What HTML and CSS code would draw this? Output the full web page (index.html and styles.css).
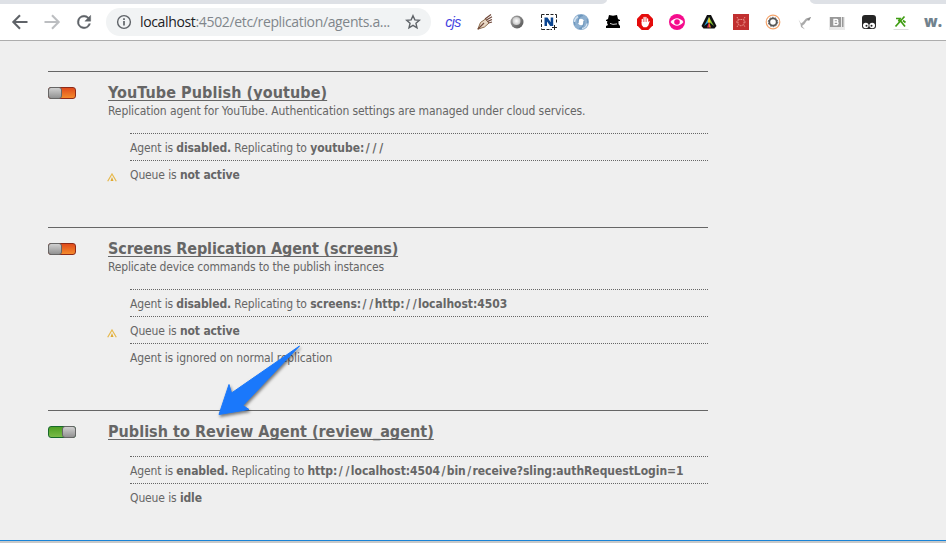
FILE: index.html
```
<!DOCTYPE html>
<html lang="en">
<head>
<meta charset="utf-8">
<title>Replication agents</title>
<link rel="stylesheet" href="styles.css">
</head>
<body>
<div class="tabs"><div class="active-tab"></div><div class="tab-rest"></div></div>
<header class="toolbar">
  <nav class="nav">
    <svg viewBox="0 0 24 24" width="20" height="20"><path d="M21 12H4.500M12 4l-8 8 8 8" fill="none" stroke="#5f6368" stroke-width="2.500"/></svg>
    <svg viewBox="0 0 24 24" width="20" height="20"><path d="M3 12h16.500M12 4l8 8-8 8" fill="none" stroke="#bcbec1" stroke-width="2.500"/></svg>
    <svg viewBox="0 0 24 24" width="20" height="20"><path d="M17.650 6.350A7.950 7.950 0 0 0 12 4a8 8 0 1 0 7.730 10h-2.080A6 6 0 1 1 12 6c1.660 0 3.140.690 4.220 1.780L13 11h7V4z" fill="#5f6368" stroke="#5f6368" stroke-width=".5"/></svg>
  </nav>
  <div class="address">
    <svg viewBox="0 0 16 16" width="16" height="16"><circle cx="8" cy="8" r="6.400" fill="none" stroke="#5f6368" stroke-width="1.400"/><path d="M8 7v4.500M8 4.200v1.700" stroke="#5f6368" stroke-width="1.700"/></svg>
    <span class="url">localhost<span class="path">:4502/etc/replication/agents.a...</span></span>
    <svg class="star" viewBox="0 0 16 16" width="16" height="16"><path d="M8 1.700l1.850 4.200 4.550.400-3.450 3 1.050 4.500L8 11.400l-4 2.400 1.050-4.500-3.450-3 4.550-.400z" fill="none" stroke="#5f6368" stroke-width="1.400"/></svg>
  </div>
  <div class="extensions">
    <span class="cjs">cjs</span>
    <svg viewBox="0 0 16 16" width="16" height="16"><path d="M.8 15.200L3.500 8.500 8.500 5l3.500 4-4.500 4z" fill="#e9d8c4" stroke="#8b6b4b" stroke-width="1"/><path d="M1 15l6-6M8 5l6-4.500M9 6.300l6-3.500M10.300 7.600L15 5.500M11.500 9L15 8" fill="none" stroke="#70483a" stroke-width="1.200"/></svg>
    <svg viewBox="0 0 16 16" width="16" height="16"><defs><linearGradient id="ball" x2="1" y2="1"><stop stop-color="#aaa"/><stop offset="1" stop-color="#505050"/></linearGradient><radialGradient id="shine"><stop stop-color="#fff"/><stop offset="1" stop-color="#c8c8c8"/></radialGradient></defs><circle cx="8" cy="8" r="6.500" fill="url(#ball)"/><circle cx="7.500" cy="7" r="4" fill="url(#shine)"/></svg>
    <svg viewBox="0 0 16 16" width="16" height="16"><path d="M.5 4V.5h3M5 .5h3M9.500.5h3M14 .5h1.500V4M15.500 5.500v3M.5 5.500v3M.5 10v3M.5 14.500v1H4M5.500 15.500h3M9.500 15.500h1.500M11 13.500h5M13.500 11v5" fill="none" stroke="#222"/><path d="M3.500 12V3.500h3l3.200 4.700V3.500h2.500V12h-3L6 7.400V12z" fill="#0b4590"/></svg>
    <svg viewBox="0 0 16 16" width="16" height="16"><circle cx="8" cy="8" r="5.500" fill="none" stroke="#8eb0d0" stroke-width="5"/><path d="M2 11a7 7 0 0 1 8-9.500C6 2 5 5 5 9M14 5a7 7 0 0 1-8 9.500c4-.500 5-3.500 5-7.500" fill="none" stroke="#6e97bd" stroke-width="1.200"/><path d="M1.500 8A6.500 6.500 0 0 1 5 2.500M9 14.500a6 6 0 0 0 5-5" fill="none" stroke="#d2e1ef" stroke-width="1.500"/><ellipse cx="8" cy="8" rx="2" ry="3.300" fill="#fff"/></svg>
    <svg viewBox="0 0 16 16" width="16" height="16"><path d="M3 5l1-4 4 .8 4-.8 1 4 2 1v1H1V6zM2.500 6h11v4l1.500 2v2H1v-2l2-1-1-2z" fill="#000"/><path d="M5 9.400l3 1 4-.5" stroke="#fff" stroke-width=".8" fill="none"/></svg>
    <svg viewBox="0 0 16 16" width="16" height="16"><path d="M4.700 0h6.600L16 4.700v6.600L11.300 16H4.700L0 11.300V4.700z" fill="#e40b0b"/><path d="M5.300 9V5.500M7.100 9V3.500M8.900 9V3.500M10.600 9V5" stroke="#fff" stroke-width="1.300" stroke-linecap="round"/><path d="M4.700 8h6.500l1-1 .5.600-1.500 4.100-1.700 1.500h-3L4.700 11z" fill="#fff"/></svg>
    <svg viewBox="0 0 16 16" width="16" height="16"><circle cx="8" cy="8" r="8" fill="#f50b8c"/><path d="M1.500 8Q8 .5 14.500 8 8 15.500 1.500 8z" fill="#fff"/><circle cx="8" cy="8" r="2.800" fill="#f50b8c"/></svg>
    <svg viewBox="0 0 16 16" width="16" height="16"><path d="M6 1h4l5.500 11-2 2.500h-11L.5 12z" fill="#111"/><path d="M8 3v5l-5 4z" fill="#29a3dd"/><path d="M8 3v5l5 4z" fill="#7fbd32"/><path d="M8 3l1.500 5L8 9 6.500 8z" fill="#f4cf22"/><path d="M8 8l2 5.500H8z" fill="#ed7f22"/><path d="M8 8l-2 5.500h2z" fill="#d92750"/></svg>
    <svg viewBox="0 0 16 16" width="16" height="16"><path d="M0 0h16v16H0z" fill="#c13030"/><path d="M4 3l1.500 2.500h5L12 3M3 8h2M11 8h2M4 13l1.500-2.500L8 12l2.500-1.500L12 13M5 5.500v5M11 5.500v5" fill="none" stroke="#ed9b91" stroke-width=".9" stroke-dasharray="1.700 .7"/></svg>
    <svg viewBox="0 0 16 16" width="16" height="16"><circle cx="8" cy="8" r="6.800" fill="#fff" stroke="#f4a46c" stroke-width="1.200"/><circle cx="8" cy="8" r="3.700" fill="none" stroke="#555" stroke-width="1.800"/><circle cx="8" cy="8" r="4.700" fill="none" stroke="#555" stroke-dasharray="1.500 1.450"/></svg>
    <svg viewBox="0 0 16 16" width="16" height="16"><path d="M1.500 5.500l2.500 4 2-1.500 3-3.500 5-1.500-1.500 2.500-3 1.500-2 3-2.500 2 3 3.500-4-2.500-.500-3z" fill="#aaa"/><path d="M10 5l4-2-2 4z" fill="#8b8b8b"/></svg>
    <svg viewBox="0 0 16 16" width="16" height="16"><path d="M0 3h16v13H0z" fill="#e9e9e9"/><path d="M1 3h11v10H1zM13 3h1.500v10H13z" fill="#999"/><path d="M5 5.500h2.500a1.200 1.200 0 0 1 0 2.500H5h3a1.400 1.400 0 0 1 0 2.700H5z" fill="none" stroke="#fff" stroke-width="1.400"/></svg>
    <svg viewBox="0 0 16 16" width="16" height="16"><rect x="1" y="1" width="14" height="14" rx="3" fill="#252525"/><circle cx="4.800" cy="11.500" r="2.800" fill="#fff"/><circle cx="11.200" cy="11.500" r="2.800" fill="#fff"/><circle cx="5.500" cy="11.800" r="1" fill="#222"/><circle cx="10.500" cy="11.800" r="1" fill="#222"/></svg>
    <svg viewBox="0 0 16 16" width="16" height="16"><path d="M.5 15.500h15" stroke="#ddd"/><path d="M2.500 12.500L11.500 2.500M3 4.500h4l-1.500 3M8 7.500l4 5M10 6.500l2.500 2" fill="none" stroke="#3f9d12" stroke-width="1.700"/></svg>
    <span class="w">w.</span>
  </div>
</header>
<main class="content">
  <section class="agent first">
    <i class="switch off"></i>
    <div>
      <h2 class="t1">YouTube Publish (youtube)</h2>
      <p class="desc">Replication agent for YouTube. Authentication settings are managed under cloud services.</p>
      <ul>
        <li>Agent is <b>disabled.</b> Replicating to <b class="uri">youtube:<span class="slash">///</span></b></li>
        <li>Queue is <b>not active</b><svg class="warn" viewBox="0 0 10 9" width="10" height="9"><path d="M.7 8.200L5 1l4.300 7.200" fill="none" stroke="#e7b94d" stroke-width="1.200"/><path d="M5 4L6.500 8h-3z" fill="#e0a92e"/></svg></li>
      </ul>
    </div>
  </section>
  <section class="agent second">
    <i class="switch off"></i>
    <div>
      <h2 class="t2">Screens Replication Agent (screens)</h2>
      <p class="desc tight">Replicate device commands to the publish instances</p>
      <ul>
        <li>Agent is <b>disabled.</b> Replicating to <b class="uri">screens:<span class="slash">//</span>http:<span class="slash">//</span>localhost:4503</b></li>
        <li>Queue is <b>not active</b><svg class="warn" viewBox="0 0 10 9" width="10" height="9"><path d="M.7 8.200L5 1l4.300 7.200" fill="none" stroke="#e7b94d" stroke-width="1.200"/><path d="M5 4L6.500 8h-3z" fill="#e0a92e"/></svg></li>
        <li>Agent is ignored on normal replication</li>
      </ul>
    </div>
  </section>
  <section class="agent third">
    <i class="switch on"></i>
    <div>
      <h2 class="t3">Publish to Review Agent (review_agent)</h2>
      <ul>
        <li>Agent is <b>enabled.</b> Replicating to <b class="uri">http:<span class="slash">//</span>localhost:4504<span class="slash">/</span>bin<span class="slash">/</span>receive?sling:authRequestLogin=1</b></li>
        <li>Queue is <b>idle</b></li>
      </ul>
    </div>
  </section>
</main>
<footer class="edge"></footer>
<svg class="arrow" viewBox="0 0 90 80" width="90" height="80"><path d="M88.500 1L20.500 48 18 39.500 8 69.500 38 64.500 32 60.500z" fill="#1a78fb" stroke="#1a78fb" stroke-linejoin="round"/></svg>
</body>
</html>
```
FILE: styles.css
```
*, *::before { box-sizing: border-box; }
body {
  margin: 0;
  height: 543px;
  display: flex;
  flex-direction: column;
  overflow: hidden;
  background: #efefef;
  color: #666;
  font: 12px/16px "DejaVu Sans Condensed", "DejaVu Sans", sans-serif;
}
svg { display: block; }
.tabs { height: 4px; flex: none; display: flex; background: #fff; justify-content: space-between; }
.active-tab { width: 607px; background: #dee1e6; border-bottom-right-radius: 6px 4px; }
.tab-rest { width: 136px; background: #dee1e6; border-bottom-left-radius: 6px 4px; }
.toolbar {
  height: 37px;
  flex: none;
  display: flex;
  align-items: center;
  background: #fff;
  border-bottom: 1px solid #adadad;
}
.nav { display: flex; flex: none; gap: 12px; padding-left: 10px; }
.address {
  display: flex;
  flex: none;
  align-items: center;
  width: 325px;
  height: 28px;
  margin-left: 12px;
  padding: 0 10px;
  border-radius: 14px;
  background: #f1f3f4;
}
.url {
  margin-left: 8px;
  color: #202124;
  font: 14px/20px "Open Sans", sans-serif;
  letter-spacing: -.35px;
  white-space: nowrap;
}
.path { color: #80868b; }
.star { margin-left: auto; }
.extensions { display: flex; flex: none; align-items: center; margin-left: 6px; }
.extensions > * { flex: none; width: 16px; margin: 0 8px; }
.extensions > *:last-child { margin-right: 0; }
.extensions > span { display: flex; justify-content: center; }
.cjs { color: #4141e0; font: italic 14px/16px "Liberation Sans", sans-serif; letter-spacing: -.5px; }
.extensions .w { color: #71828d; font: 800 15px/16px "Open Sans", sans-serif; padding-bottom: 2px; }

.content { flex: 1; padding: 30px 0 0 48px; }
.agent {
  display: grid;
  grid-template-columns: 60px 600px;
  width: 660px;
  border-top: 1px solid #666;
}
.first { height: 156px; }
.second { height: 183px; }
.switch {
  display: flex;
  width: 28px;
  height: 12px;
  margin-top: 15px;
  border: 1px solid #8d2a18;
  border-radius: 3px;
  background: linear-gradient(#e04b1c, #f48a2b);
}
.switch::before {
  content: "";
  width: 14px;
  height: 12px;
  margin: -1px;
  border: 1px solid #666;
  border-radius: 3px;
  background: linear-gradient(#d0d0d0, #929292);
}
.switch.on { justify-content: flex-end; border-color: #17692b; background: linear-gradient(#4d9f23, #7abb48); }
h2 {
  margin: 9px 0 0;
  font: 700 16px/23px "DejaVu Sans Condensed", "DejaVu Sans", sans-serif;
  text-decoration: underline;
  text-decoration-thickness: 1px;
  text-underline-offset: 2px;
  text-decoration-skip-ink: none;
  white-space: nowrap;
}
.t1 { letter-spacing: .08px; }
.t2 { letter-spacing: -.13px; }
.t3 { letter-spacing: .03px; }
p { margin: -1px 0 0; height: 16px; letter-spacing: -.1px; }
.tight { letter-spacing: -.17px; }
ul { margin: 14px 0 0 22px; padding: 0; list-style: none; }
.third ul { margin-top: 13px; }
li {
  position: relative;
  height: 27px;
  padding-top: 6px;
  border-top: 1px dotted #666;
  letter-spacing: -.12px;
  white-space: nowrap;
}
.uri { letter-spacing: -.03px; }
.slash { letter-spacing: 2.8px; margin: 0 -1.4px 0 1.4px; }
.warn { position: absolute; left: -23px; top: 12px; }
.edge { flex: none; height: 3px; background: #c9c9c9; border-top: 1px solid #1883d7; }
.arrow { position: absolute; left: 211px; top: 345px; filter: drop-shadow(1px 2px 1.5px rgba(0, 0, 0, .5)); }
```
